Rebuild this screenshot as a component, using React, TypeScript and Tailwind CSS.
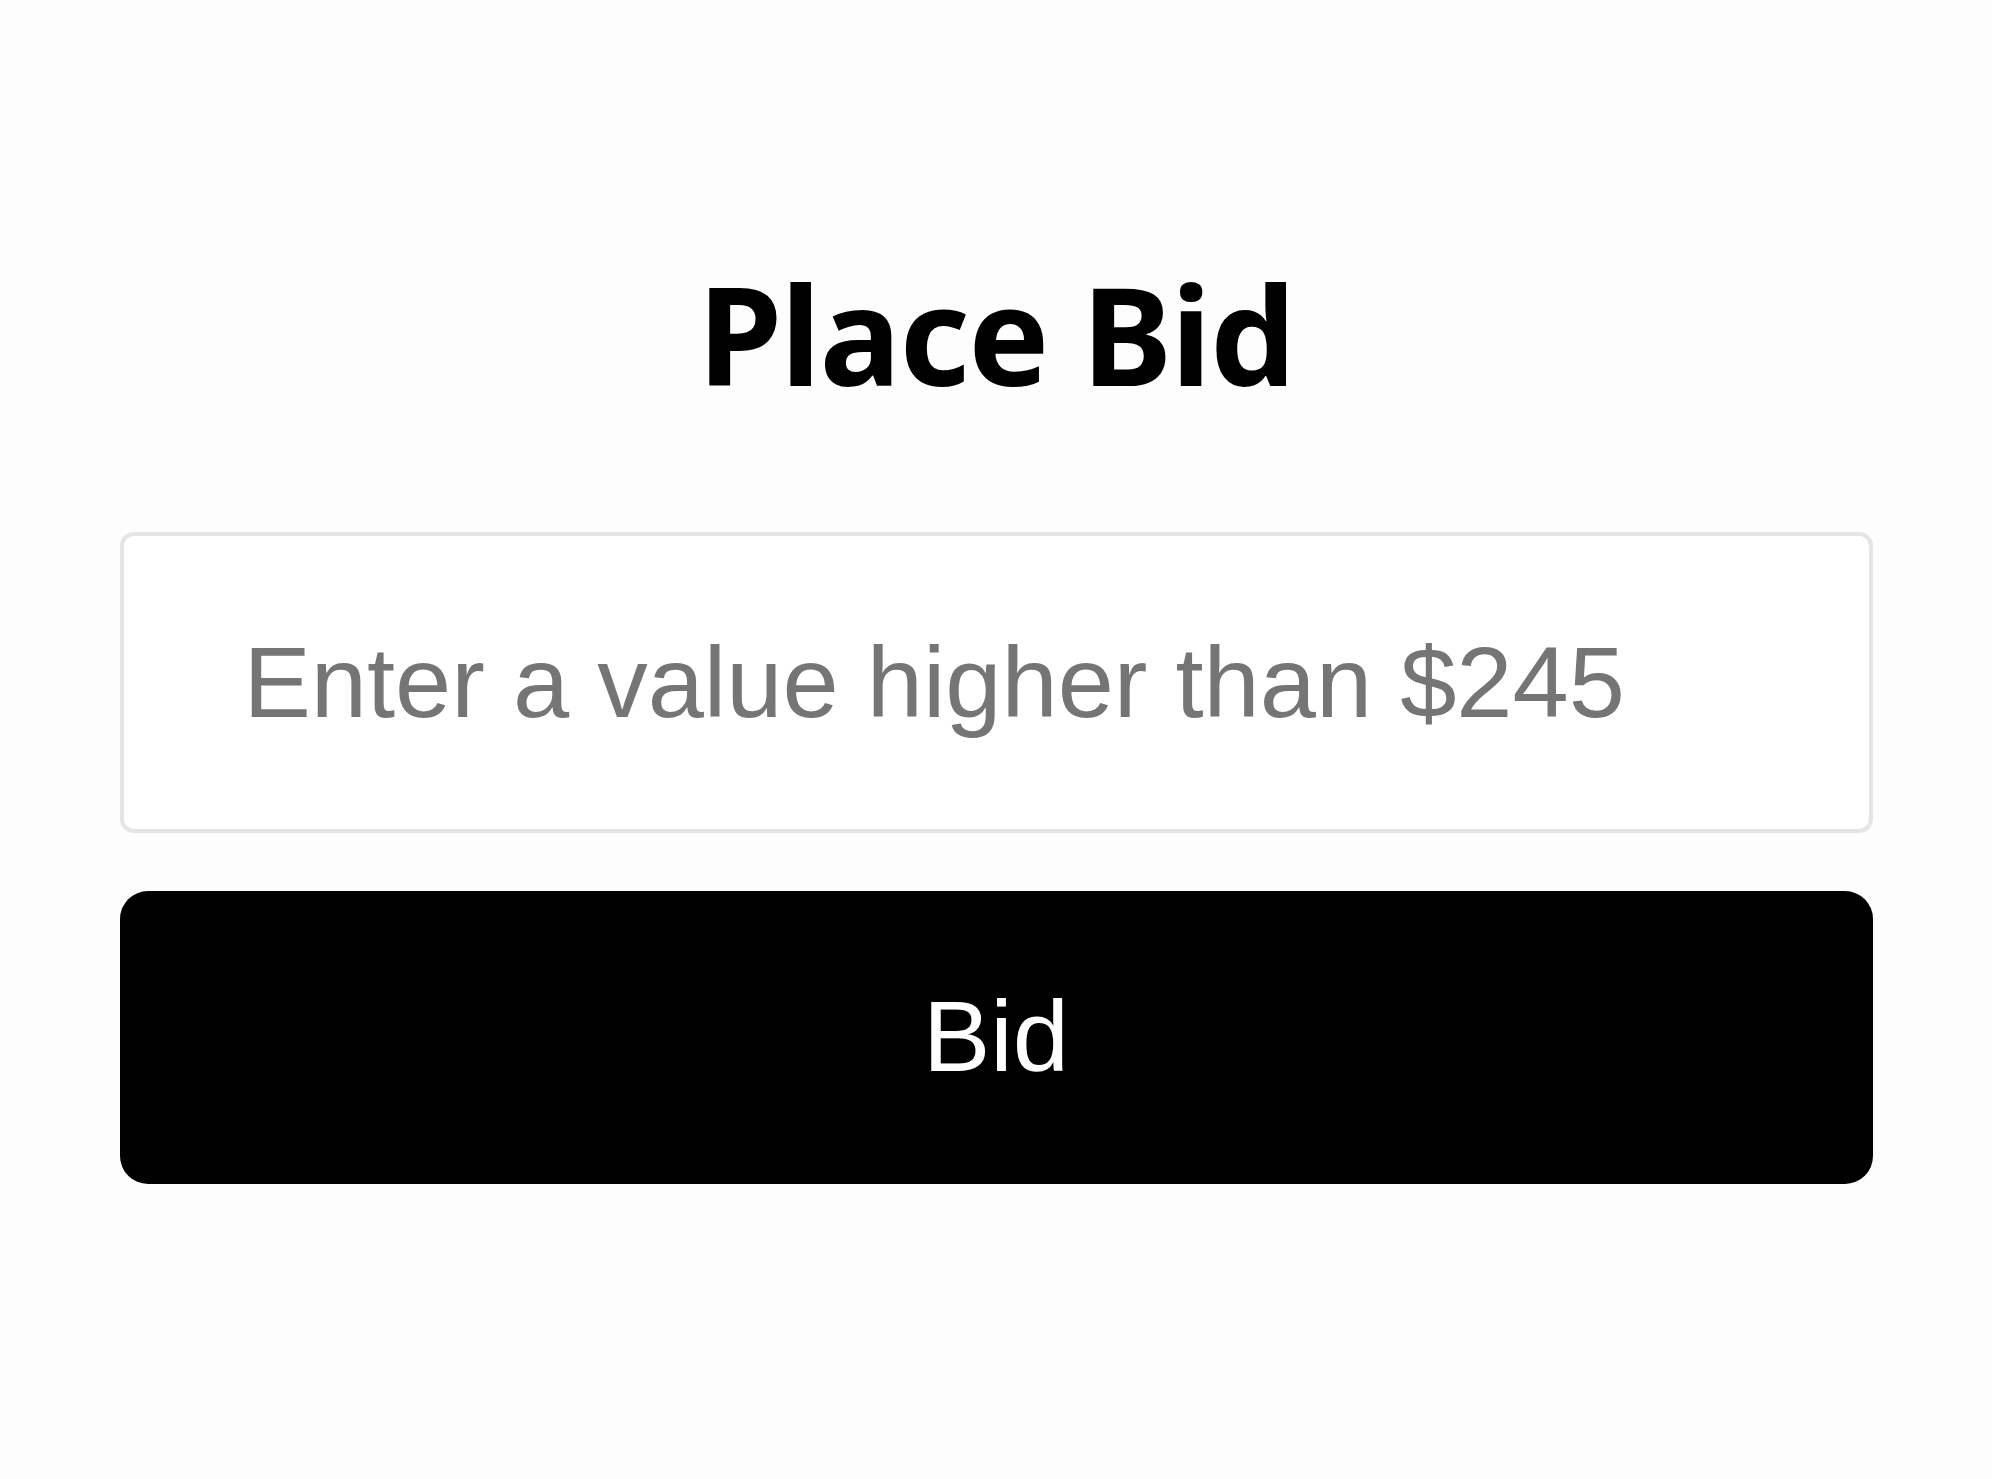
export default function App() {
  return (
    <div className="min-h-screen w-full bg-[#fdfdfd]">
      <div className="mx-auto flex w-[1753px] flex-col pt-[259px]">
        {/* Title */}
        <h1 className="text-center font-['Noto_Sans',sans-serif] text-[136px] font-bold leading-[1.1] tracking-[-1.5px] text-black">
          Place Bid
        </h1>

        {/* Bid amount */}
        <input
          type="text"
          placeholder="Enter a value higher than $245"
          className="mt-[123px] h-[301px] w-full rounded-[14px] border-4 border-[#e5e5e5] bg-white pl-[120px] font-['Liberation_Sans',Arial,sans-serif] text-[101px] text-black outline-none placeholder:text-[#757575]"
        />

        <button className="mt-[58px] h-[293px] w-full rounded-[28px] bg-black font-['Liberation_Sans',Arial,sans-serif] text-[101px] text-white">
          Bid
        </button>
      </div>
    </div>
  );
}
